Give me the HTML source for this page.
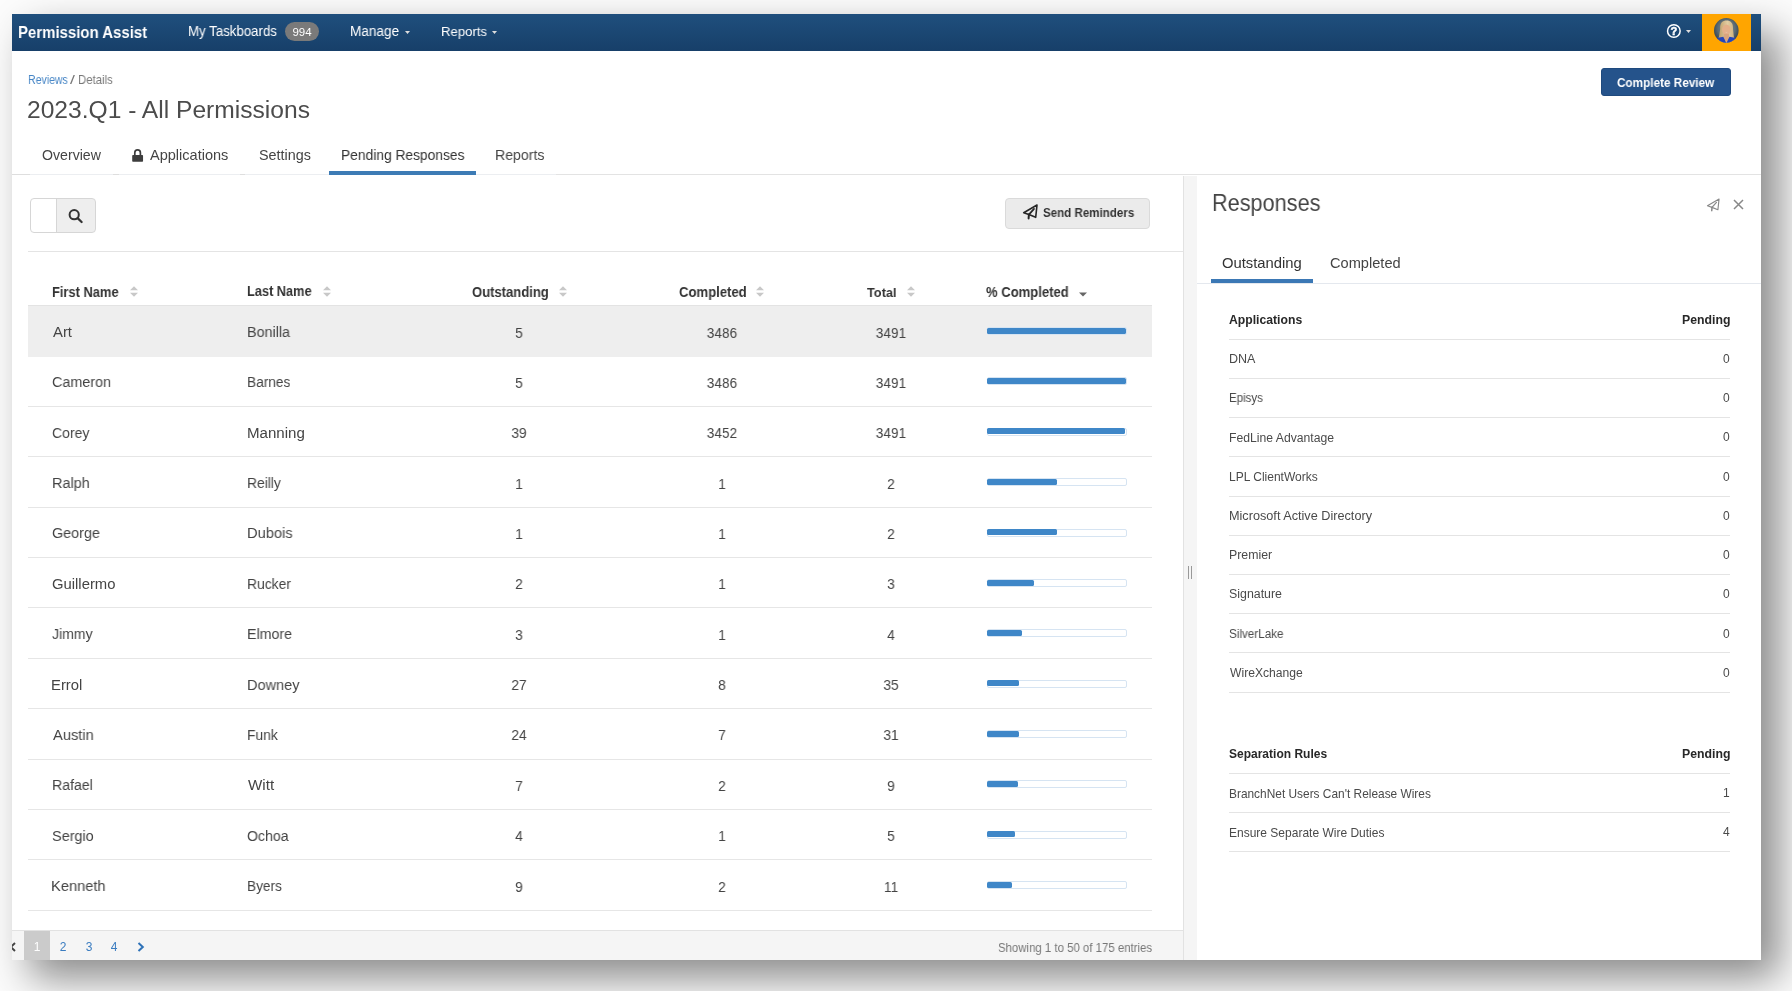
<!DOCTYPE html>
<html><head><meta charset="utf-8"><title>Permission Assist</title>
<style>
html,body{margin:0;padding:0;}
body{width:1792px;height:991px;overflow:hidden;background:#fcfcfc;position:relative;font-family:"Liberation Sans",sans-serif;}
#win{position:absolute;left:12px;top:14px;width:1749px;height:946px;background:#fff;overflow:hidden;
box-shadow:18px 18px 38px rgba(0,0,0,0.46);}
.t{position:absolute;white-space:nowrap;-webkit-font-smoothing:antialiased;will-change:transform;}
.r{position:absolute;}
</style></head><body>
<div id="win">
<div class="r" style="left:0.00px;top:0.00px;width:1749.00px;height:37.00px;background:linear-gradient(#1f4f7d,#173f69);"></div>
<div class="t" style="top:8.00px;font-size:16.576px;line-height:19.062px;color:#fff;padding-top:0.622px;font-weight:bold;left:6.19px;transform-origin:0 50%;transform: scaleX(0.9029);">Permission Assist</div>
<div class="t" style="top:10.00px;font-size:13.833px;line-height:15.908px;color:#fff;padding-top:0.150px;left:175.51px;transform-origin:0 50%;transform: scaleX(0.9588);">My Taskboards</div>
<div class="r" style="left:273.00px;top:8.00px;width:34.00px;height:19.00px;background:#7a7a7a;border-radius:10px;"></div>
<div class="t" style="top:12.00px;font-size:11.500px;line-height:13.225px;color:#fff;left:290.00px;transform:translateX(-50%);">994</div>
<div class="t" style="top:10.00px;font-size:13.886px;line-height:15.969px;color:#fff;padding-top:0.102px;left:337.78px;transform-origin:0 50%;transform: scaleX(0.9788);">Manage</div>
<div class="t" style="top:9.00px;font-size:13.608px;line-height:15.649px;color:#fff;padding-top:0.958px;left:428.62px;transform-origin:0 50%;transform: scaleX(0.9661);">Reports</div>
<svg class="r" style="left:392.5px;top:16.5px" width="5" height="3"><path d="M0 0H5L2.5 3Z" fill="#ddd"/></svg>
<svg class="r" style="left:480.3px;top:16.5px" width="5" height="3"><path d="M0 0H5L2.5 3Z" fill="#ddd"/></svg>
<svg class="r" style="left:1654px;top:9px" width="16" height="16" viewBox="0 0 16 16"><circle cx="7.85" cy="8" r="6.3" fill="none" stroke="#fff" stroke-width="1.5"/></svg>
<div class="t" style="top:11.00px;font-size:11.200px;line-height:12.88px;color:#fff;font-weight:bold;left:1662.20px;transform:translateX(-50%);-webkit-text-stroke:0.5px #fff;">?</div>
<svg class="r" style="left:1674px;top:16.2px" width="5" height="3"><path d="M0 0H5L2.5 3Z" fill="#ddd"/></svg>
<div class="r" style="left:1690.00px;top:0.00px;width:49.00px;height:37.00px;background:#ffa500;"></div>
<svg class="r" style="left:1702.2px;top:4.100000000000001px" width="25" height="25" viewBox="0 0 25 25">
<defs><clipPath id="cc"><circle cx="12.3" cy="12.4" r="12.3"/></clipPath>
<radialGradient id="bg" cx="50%" cy="42%" r="58%"><stop offset="0" stop-color="#8a979c"/><stop offset="0.6" stop-color="#5d6c74"/><stop offset="1" stop-color="#2f3f4c"/></radialGradient>
<linearGradient id="hair" x1="0" y1="0" x2="1" y2="0"><stop offset="0" stop-color="#b8975f"/><stop offset="0.55" stop-color="#e2cda2"/><stop offset="1" stop-color="#c9aa74"/></linearGradient></defs>
<g clip-path="url(#cc)"><rect width="25" height="25" fill="url(#bg)"/>
<path d="M6.2 11C5.8 4.5 8.8 2.4 12.6 2.4S19.4 4.6 19 11L19.8 18.5L22 25L3 25L5 18.5Z" fill="url(#hair)"/>
<ellipse cx="12.4" cy="11.6" rx="4.3" ry="5.2" fill="#e3b08a"/>
<path d="M10.8 13.8Q12.4 15 14.1 13.8Q12.4 14.3 10.8 13.8Z" fill="#e9cfc4"/>
<path d="M10 16L14.8 16L15.5 21L12.5 24.5L9.5 21Z" fill="#d9a47e"/>
<path d="M0.5 25L2.8 20L9.3 18.8L12.6 25.5Z M24.5 25L22 20L15.5 18.8L12.2 25.5Z" fill="#2546b8"/>
</g></svg>
<div class="t" style="top:58.00px;font-size:12.320px;line-height:14.168px;color:#4786c6;padding-top:0.745px;left:15.73px;transform-origin:0 50%;transform: scaleX(0.8555);">Reviews</div>
<div class="t" style="top:58.00px;font-size:12.320px;line-height:14.168px;color:#777;padding-top:0.745px;left:58.30px;transform-origin:0 50%;transform: scaleX(1.4333);">/</div>
<div class="t" style="top:58.00px;font-size:12.320px;line-height:14.168px;color:#777;padding-top:0.745px;left:65.66px;transform-origin:0 50%;transform: scaleX(0.9221);">Details</div>
<div class="t" style="top:81.00px;font-size:24.400px;line-height:28.06px;color:#4c4c4c;padding-top:0.611px;left:15.17px;transform-origin:0 50%;transform: scaleX(1.0084);">2023.Q1 - All Permissions</div>
<div class="r" style="left:1589.00px;top:54.00px;width:130.00px;height:28.00px;background:#25538b;border:1px solid #1f4a7e;border-radius:3px;box-sizing:border-box;"></div>
<div class="t" style="top:61.00px;font-size:12.285px;line-height:14.128px;color:#fff;padding-top:0.677px;font-weight:bold;left:1605.23px;transform-origin:0 50%;transform: scaleX(0.9570);">Complete Review</div>
<div class="t" style="top:133.00px;font-size:14.000px;line-height:16.1px;color:#444;padding-top:0.096px;left:29.93px;transform-origin:0 50%;transform: scaleX(1.0101);">Overview</div>
<svg class="r" style="left:120px;top:135px" width="12" height="13" viewBox="0 0 12 13"><path d="M2.8 6.8V3.75a2.8 2.8 0 0 1 5.6 0V6.8" fill="none" stroke="#3d3d3d" stroke-width="1.7"/><rect x="0.2" y="6.1" width="10.85" height="6.6" rx="0.8" fill="#3d3d3d"/></svg>
<div class="t" style="top:132.00px;font-size:14.400px;line-height:16.56px;color:#444;padding-top:0.728px;left:137.76px;transform-origin:0 50%;transform: scaleX(1.0102);">Applications</div>
<div class="t" style="top:133.00px;font-size:14.100px;line-height:16.215px;color:#444;padding-top:0.004px;left:246.85px;transform-origin:0 50%;transform: scaleX(1.0199);">Settings</div>
<div class="t" style="top:132.00px;font-size:14.742px;line-height:16.953px;color:#333;padding-top:0.913px;left:328.96px;transform-origin:0 50%;transform: scaleX(0.9362);">Pending Responses</div>
<div class="t" style="top:132.00px;font-size:14.742px;line-height:16.953px;color:#444;padding-top:0.913px;left:482.94px;transform-origin:0 50%;transform: scaleX(0.9579);">Reports</div>
<div class="r" style="left:0.00px;top:160.00px;width:544.00px;height:1.00px;background:#eceef1;"></div>
<div class="r" style="left:544.00px;top:160.00px;width:1205.00px;height:1.00px;background:#e3e3e3;"></div>
<div class="r" style="left:0.00px;top:160.00px;width:18.00px;height:1.00px;background:#dedede;"></div>
<div class="r" style="left:101.00px;top:160.00px;width:6.00px;height:1.00px;background:#dedede;"></div>
<div class="r" style="left:228.00px;top:160.00px;width:5.00px;height:1.00px;background:#dedede;"></div>
<div class="r" style="left:317.00px;top:156.50px;width:147.30px;height:4.20px;background:#3d7bb5;"></div>
<div class="r" style="left:18.00px;top:184.00px;width:66.00px;height:35.00px;border:1px solid #d6d6d6;border-radius:4px;box-sizing:border-box;background:linear-gradient(90deg,#fff 0,#fff 25px,#d6d6d6 25px,#d6d6d6 26px,#eee 26px);"></div>
<svg class="r" style="left:55px;top:193px" width="16" height="17" viewBox="0 0 16 17"><circle cx="7.2" cy="7.7" r="4.6" fill="none" stroke="#333" stroke-width="2"/><path d="M10.6 11.1L14.6 15" stroke="#333" stroke-width="2.2" stroke-linecap="round"/></svg>
<div class="r" style="left:993.00px;top:184.00px;width:145.00px;height:30.50px;background:#ebebeb;border:1px solid #dadada;border-radius:4px;box-sizing:border-box;"></div>
<svg class="r" style="left:1009.50px;top:188.50px" width="17.0" height="17.0"><path d="M15.00 2.00L1.70 9.70L6.90 11.60L13.70 14.30Z" fill="none" stroke="#262626" stroke-width="1.6" stroke-linejoin="round"/><path d="M12.00 5.90L6.90 11.60" stroke="#262626" stroke-width="1.7600000000000002" stroke-linecap="round"/><path d="M6.90 11.60L6.60 15.40" stroke="#262626" stroke-width="2.0" stroke-linecap="round"/></svg>
<div class="t" style="top:192.00px;font-size:12.022px;line-height:13.826px;color:#333;padding-top:0.819px;font-weight:bold;left:1030.55px;transform-origin:0 50%;transform: scaleX(0.9615);">Send Reminders</div>
<div class="r" style="left:16.00px;top:237.00px;width:1155.00px;height:1.00px;background:#e4e4e4;"></div>
<div class="t" style="top:270.00px;font-size:13.915px;line-height:16.002px;color:#333;padding-top:0.275px;font-weight:bold;left:40.23px;transform-origin:0 50%;transform: scaleX(0.9261);">First Name</div>
<svg class="r" style="left:117.5px;top:272px" width="8" height="11" viewBox="0 0 8 11"><path d="M0 4.3L4 0.3L8 4.3Z M0 6.7L4 10.7L8 6.7Z" fill="#c8c8c8"/></svg>
<div class="t" style="top:270.00px;font-size:13.860px;line-height:15.939px;color:#333;padding-top:0.326px;font-weight:bold;left:235.14px;transform-origin:0 50%;transform: scaleX(0.9213);">Last Name</div>
<svg class="r" style="left:310.6px;top:272px" width="8" height="11" viewBox="0 0 8 11"><path d="M0 4.3L4 0.3L8 4.3Z M0 6.7L4 10.7L8 6.7Z" fill="#c8c8c8"/></svg>
<div class="t" style="top:270.00px;font-size:14.080px;line-height:16.192px;color:#333;padding-top:0.123px;font-weight:bold;left:459.58px;transform-origin:0 50%;transform: scaleX(0.9261);">Outstanding</div>
<svg class="r" style="left:547px;top:272px" width="8" height="11" viewBox="0 0 8 11"><path d="M0 4.3L4 0.3L8 4.3Z M0 6.7L4 10.7L8 6.7Z" fill="#c8c8c8"/></svg>
<div class="t" style="top:270.00px;font-size:14.135px;line-height:16.255px;color:#333;padding-top:0.072px;font-weight:bold;left:666.78px;transform-origin:0 50%;transform: scaleX(0.9279);">Completed</div>
<svg class="r" style="left:744.4px;top:272px" width="8" height="11" viewBox="0 0 8 11"><path d="M0 4.3L4 0.3L8 4.3Z M0 6.7L4 10.7L8 6.7Z" fill="#c8c8c8"/></svg>
<div class="t" style="top:270.00px;font-size:13.640px;line-height:15.686px;color:#333;padding-top:0.528px;font-weight:bold;left:854.87px;transform-origin:0 50%;transform: scaleX(0.9349);">Total</div>
<svg class="r" style="left:895px;top:272px" width="8" height="11" viewBox="0 0 8 11"><path d="M0 4.3L4 0.3L8 4.3Z M0 6.7L4 10.7L8 6.7Z" fill="#c8c8c8"/></svg>
<div class="t" style="top:270.00px;font-size:14.135px;line-height:16.255px;color:#333;padding-top:0.072px;font-weight:bold;left:974.27px;transform-origin:0 50%;transform: scaleX(0.9248);">% Completed</div>
<svg class="r" style="left:1067px;top:278px" width="8" height="5" viewBox="0 0 8 5"><path d="M0 0.5L4 4.5L8 0.5Z" fill="#666"/></svg>
<div class="r" style="left:16.00px;top:291.00px;width:1124.00px;height:1.00px;background:#e3e3e3;"></div>
<div class="r" style="left:16.00px;top:291.50px;width:1124.00px;height:51.16px;background:#eeeeee;"></div>
<div class="t" style="top:310.00px;font-size:14.840px;line-height:17.066px;color:#444;padding-top:0.022px;left:40.66px;transform-origin:0 50%;transform: scaleX(0.9995);">Art</div>
<div class="t" style="top:310.00px;font-size:14.840px;line-height:17.066px;color:#444;padding-top:0.022px;left:234.82px;transform-origin:0 50%;transform: scaleX(0.9646);">Bonilla</div>
<div class="t" style="top:309.00px;font-size:15.344px;line-height:17.646px;color:#444;padding-top:0.558px;left:507.20px;transform:translateX(-50%) scaleX(0.8929);">5</div>
<div class="t" style="top:309.00px;font-size:15.344px;line-height:17.646px;color:#444;padding-top:0.558px;left:710.00px;transform:translateX(-50%) scaleX(0.8929);">3486</div>
<div class="t" style="top:309.00px;font-size:15.344px;line-height:17.646px;color:#444;padding-top:0.558px;left:878.50px;transform:translateX(-50%) scaleX(0.8929);">3491</div>
<div class="r" style="left:974.50px;top:313.10px;width:140.20px;height:8.00px;background:#fff;border:1px solid #d6e4f2;border-bottom-width:1.5px;border-radius:2px;box-sizing:border-box;"></div>
<div class="r" style="left:975.00px;top:313.70px;width:139.30px;height:6.00px;background:#3f87c8;border-radius:1.5px;"></div>
<div class="r" style="left:16.00px;top:392.02px;width:1124.00px;height:1.00px;background:#e6e6e6;"></div>
<div class="t" style="top:360.00px;font-size:14.840px;line-height:17.066px;color:#444;padding-top:0.382px;left:39.98px;transform-origin:0 50%;transform: scaleX(0.9687);">Cameron</div>
<div class="t" style="top:360.00px;font-size:14.840px;line-height:17.066px;color:#444;padding-top:0.382px;left:234.87px;transform-origin:0 50%;transform: scaleX(0.9235);">Barnes</div>
<div class="t" style="top:359.00px;font-size:15.344px;line-height:17.646px;color:#444;padding-top:0.918px;left:507.20px;transform:translateX(-50%) scaleX(0.8929);">5</div>
<div class="t" style="top:359.00px;font-size:15.344px;line-height:17.646px;color:#444;padding-top:0.918px;left:710.00px;transform:translateX(-50%) scaleX(0.8929);">3486</div>
<div class="t" style="top:359.00px;font-size:15.344px;line-height:17.646px;color:#444;padding-top:0.918px;left:878.50px;transform:translateX(-50%) scaleX(0.8929);">3491</div>
<div class="r" style="left:974.50px;top:363.46px;width:140.20px;height:8.00px;background:#fff;border:1px solid #d6e4f2;border-bottom-width:1.5px;border-radius:2px;box-sizing:border-box;"></div>
<div class="r" style="left:975.00px;top:364.06px;width:139.30px;height:6.00px;background:#3f87c8;border-radius:1.5px;"></div>
<div class="r" style="left:16.00px;top:442.38px;width:1124.00px;height:1.00px;background:#e6e6e6;"></div>
<div class="t" style="top:410.00px;font-size:14.840px;line-height:17.066px;color:#444;padding-top:0.742px;left:40.00px;transform-origin:0 50%;transform: scaleX(0.9431);">Corey</div>
<div class="t" style="top:410.00px;font-size:14.840px;line-height:17.066px;color:#444;padding-top:0.742px;left:234.75px;transform-origin:0 50%;transform: scaleX(1.0172);">Manning</div>
<div class="t" style="top:410.00px;font-size:15.344px;line-height:17.646px;color:#444;padding-top:0.278px;left:507.20px;transform:translateX(-50%) scaleX(0.8929);">39</div>
<div class="t" style="top:410.00px;font-size:15.344px;line-height:17.646px;color:#444;padding-top:0.278px;left:710.00px;transform:translateX(-50%) scaleX(0.8929);">3452</div>
<div class="t" style="top:410.00px;font-size:15.344px;line-height:17.646px;color:#444;padding-top:0.278px;left:878.50px;transform:translateX(-50%) scaleX(0.8929);">3491</div>
<div class="r" style="left:974.50px;top:413.82px;width:140.20px;height:8.00px;background:#fff;border:1px solid #d6e4f2;border-bottom-width:1.5px;border-radius:2px;box-sizing:border-box;"></div>
<div class="r" style="left:975.00px;top:414.42px;width:137.94px;height:6.00px;background:#3f87c8;border-radius:1.5px;"></div>
<div class="r" style="left:16.00px;top:492.74px;width:1124.00px;height:1.00px;background:#e6e6e6;"></div>
<div class="t" style="top:461.00px;font-size:14.840px;line-height:17.066px;color:#444;padding-top:0.102px;left:39.51px;transform-origin:0 50%;transform: scaleX(0.9749);">Ralph</div>
<div class="t" style="top:461.00px;font-size:14.840px;line-height:17.066px;color:#444;padding-top:0.102px;left:234.86px;transform-origin:0 50%;transform: scaleX(0.9337);">Reilly</div>
<div class="t" style="top:460.00px;font-size:15.344px;line-height:17.646px;color:#444;padding-top:0.638px;left:507.20px;transform:translateX(-50%) scaleX(0.8929);">1</div>
<div class="t" style="top:460.00px;font-size:15.344px;line-height:17.646px;color:#444;padding-top:0.638px;left:710.00px;transform:translateX(-50%) scaleX(0.8929);">1</div>
<div class="t" style="top:460.00px;font-size:15.344px;line-height:17.646px;color:#444;padding-top:0.638px;left:878.50px;transform:translateX(-50%) scaleX(0.8929);">2</div>
<div class="r" style="left:974.50px;top:464.18px;width:140.20px;height:8.00px;background:#fff;border:1px solid #d6e4f2;border-bottom-width:1.5px;border-radius:2px;box-sizing:border-box;"></div>
<div class="r" style="left:975.00px;top:464.78px;width:69.75px;height:6.00px;background:#3f87c8;border-radius:1.5px;"></div>
<div class="r" style="left:16.00px;top:543.10px;width:1124.00px;height:1.00px;background:#e6e6e6;"></div>
<div class="t" style="top:511.00px;font-size:14.840px;line-height:17.066px;color:#444;padding-top:0.462px;left:39.98px;transform-origin:0 50%;transform: scaleX(0.9684);">George</div>
<div class="t" style="top:511.00px;font-size:14.840px;line-height:17.066px;color:#444;padding-top:0.462px;left:234.79px;transform-origin:0 50%;transform: scaleX(0.9877);">Dubois</div>
<div class="t" style="top:510.00px;font-size:15.344px;line-height:17.646px;color:#444;padding-top:0.998px;left:507.20px;transform:translateX(-50%) scaleX(0.8929);">1</div>
<div class="t" style="top:510.00px;font-size:15.344px;line-height:17.646px;color:#444;padding-top:0.998px;left:710.00px;transform:translateX(-50%) scaleX(0.8929);">1</div>
<div class="t" style="top:510.00px;font-size:15.344px;line-height:17.646px;color:#444;padding-top:0.998px;left:878.50px;transform:translateX(-50%) scaleX(0.8929);">2</div>
<div class="r" style="left:974.50px;top:514.54px;width:140.20px;height:8.00px;background:#fff;border:1px solid #d6e4f2;border-bottom-width:1.5px;border-radius:2px;box-sizing:border-box;"></div>
<div class="r" style="left:975.00px;top:515.14px;width:69.75px;height:6.00px;background:#3f87c8;border-radius:1.5px;"></div>
<div class="r" style="left:16.00px;top:593.46px;width:1124.00px;height:1.00px;background:#e6e6e6;"></div>
<div class="t" style="top:561.00px;font-size:14.840px;line-height:17.066px;color:#444;padding-top:0.822px;left:39.96px;transform-origin:0 50%;transform: scaleX(0.9945);">Guillermo</div>
<div class="t" style="top:561.00px;font-size:14.840px;line-height:17.066px;color:#444;padding-top:0.822px;left:234.85px;transform-origin:0 50%;transform: scaleX(0.9373);">Rucker</div>
<div class="t" style="top:561.00px;font-size:15.344px;line-height:17.646px;color:#444;padding-top:0.358px;left:507.20px;transform:translateX(-50%) scaleX(0.8929);">2</div>
<div class="t" style="top:561.00px;font-size:15.344px;line-height:17.646px;color:#444;padding-top:0.358px;left:710.00px;transform:translateX(-50%) scaleX(0.8929);">1</div>
<div class="t" style="top:561.00px;font-size:15.344px;line-height:17.646px;color:#444;padding-top:0.358px;left:878.50px;transform:translateX(-50%) scaleX(0.8929);">3</div>
<div class="r" style="left:974.50px;top:564.90px;width:140.20px;height:8.00px;background:#fff;border:1px solid #d6e4f2;border-bottom-width:1.5px;border-radius:2px;box-sizing:border-box;"></div>
<div class="r" style="left:975.00px;top:565.50px;width:46.50px;height:6.00px;background:#3f87c8;border-radius:1.5px;"></div>
<div class="r" style="left:16.00px;top:643.82px;width:1124.00px;height:1.00px;background:#e6e6e6;"></div>
<div class="t" style="top:612.00px;font-size:14.840px;line-height:17.066px;color:#444;padding-top:0.182px;left:40.49px;transform-origin:0 50%;transform: scaleX(0.9462);">Jimmy</div>
<div class="t" style="top:612.00px;font-size:14.840px;line-height:17.066px;color:#444;padding-top:0.182px;left:234.83px;transform-origin:0 50%;transform: scaleX(0.9590);">Elmore</div>
<div class="t" style="top:611.00px;font-size:15.344px;line-height:17.646px;color:#444;padding-top:0.718px;left:507.20px;transform:translateX(-50%) scaleX(0.8929);">3</div>
<div class="t" style="top:611.00px;font-size:15.344px;line-height:17.646px;color:#444;padding-top:0.718px;left:710.00px;transform:translateX(-50%) scaleX(0.8929);">1</div>
<div class="t" style="top:611.00px;font-size:15.344px;line-height:17.646px;color:#444;padding-top:0.718px;left:878.50px;transform:translateX(-50%) scaleX(0.8929);">4</div>
<div class="r" style="left:974.50px;top:615.26px;width:140.20px;height:8.00px;background:#fff;border:1px solid #d6e4f2;border-bottom-width:1.5px;border-radius:2px;box-sizing:border-box;"></div>
<div class="r" style="left:975.00px;top:615.86px;width:34.88px;height:6.00px;background:#3f87c8;border-radius:1.5px;"></div>
<div class="r" style="left:16.00px;top:694.18px;width:1124.00px;height:1.00px;background:#e6e6e6;"></div>
<div class="t" style="top:662.00px;font-size:14.840px;line-height:17.066px;color:#444;padding-top:0.542px;left:39.49px;transform-origin:0 50%;transform: scaleX(0.9889);">Errol</div>
<div class="t" style="top:662.00px;font-size:14.840px;line-height:17.066px;color:#444;padding-top:0.542px;left:234.80px;transform-origin:0 50%;transform: scaleX(0.9781);">Downey</div>
<div class="t" style="top:662.00px;font-size:15.344px;line-height:17.646px;color:#444;padding-top:0.078px;left:507.20px;transform:translateX(-50%) scaleX(0.8929);">27</div>
<div class="t" style="top:662.00px;font-size:15.344px;line-height:17.646px;color:#444;padding-top:0.078px;left:710.00px;transform:translateX(-50%) scaleX(0.8929);">8</div>
<div class="t" style="top:662.00px;font-size:15.344px;line-height:17.646px;color:#444;padding-top:0.078px;left:878.50px;transform:translateX(-50%) scaleX(0.8929);">35</div>
<div class="r" style="left:974.50px;top:665.62px;width:140.20px;height:8.00px;background:#fff;border:1px solid #d6e4f2;border-bottom-width:1.5px;border-radius:2px;box-sizing:border-box;"></div>
<div class="r" style="left:975.00px;top:666.22px;width:31.89px;height:6.00px;background:#3f87c8;border-radius:1.5px;"></div>
<div class="r" style="left:16.00px;top:744.54px;width:1124.00px;height:1.00px;background:#e6e6e6;"></div>
<div class="t" style="top:712.00px;font-size:14.840px;line-height:17.066px;color:#444;padding-top:0.902px;left:40.66px;transform-origin:0 50%;transform: scaleX(0.9862);">Austin</div>
<div class="t" style="top:712.00px;font-size:14.840px;line-height:17.066px;color:#444;padding-top:0.902px;left:234.86px;transform-origin:0 50%;transform: scaleX(0.9352);">Funk</div>
<div class="t" style="top:712.00px;font-size:15.344px;line-height:17.646px;color:#444;padding-top:0.438px;left:507.20px;transform:translateX(-50%) scaleX(0.8929);">24</div>
<div class="t" style="top:712.00px;font-size:15.344px;line-height:17.646px;color:#444;padding-top:0.438px;left:710.00px;transform:translateX(-50%) scaleX(0.8929);">7</div>
<div class="t" style="top:712.00px;font-size:15.344px;line-height:17.646px;color:#444;padding-top:0.438px;left:878.50px;transform:translateX(-50%) scaleX(0.8929);">31</div>
<div class="r" style="left:974.50px;top:715.98px;width:140.20px;height:8.00px;background:#fff;border:1px solid #d6e4f2;border-bottom-width:1.5px;border-radius:2px;box-sizing:border-box;"></div>
<div class="r" style="left:975.00px;top:716.58px;width:31.50px;height:6.00px;background:#3f87c8;border-radius:1.5px;"></div>
<div class="r" style="left:16.00px;top:794.90px;width:1124.00px;height:1.00px;background:#e6e6e6;"></div>
<div class="t" style="top:763.00px;font-size:14.840px;line-height:17.066px;color:#444;padding-top:0.262px;left:39.53px;transform-origin:0 50%;transform: scaleX(0.9542);">Rafael</div>
<div class="t" style="top:763.00px;font-size:14.840px;line-height:17.066px;color:#444;padding-top:0.262px;left:235.92px;transform-origin:0 50%;transform: scaleX(1.0246);">Witt</div>
<div class="t" style="top:762.00px;font-size:15.344px;line-height:17.646px;color:#444;padding-top:0.798px;left:507.20px;transform:translateX(-50%) scaleX(0.8929);">7</div>
<div class="t" style="top:762.00px;font-size:15.344px;line-height:17.646px;color:#444;padding-top:0.798px;left:710.00px;transform:translateX(-50%) scaleX(0.8929);">2</div>
<div class="t" style="top:762.00px;font-size:15.344px;line-height:17.646px;color:#444;padding-top:0.798px;left:878.50px;transform:translateX(-50%) scaleX(0.8929);">9</div>
<div class="r" style="left:974.50px;top:766.34px;width:140.20px;height:8.00px;background:#fff;border:1px solid #d6e4f2;border-bottom-width:1.5px;border-radius:2px;box-sizing:border-box;"></div>
<div class="r" style="left:975.00px;top:766.94px;width:31.00px;height:6.00px;background:#3f87c8;border-radius:1.5px;"></div>
<div class="r" style="left:16.00px;top:845.26px;width:1124.00px;height:1.00px;background:#e6e6e6;"></div>
<div class="t" style="top:813.00px;font-size:14.840px;line-height:17.066px;color:#444;padding-top:0.622px;left:40.05px;transform-origin:0 50%;transform: scaleX(0.9753);">Sergio</div>
<div class="t" style="top:813.00px;font-size:14.840px;line-height:17.066px;color:#444;padding-top:0.622px;left:235.33px;transform-origin:0 50%;transform: scaleX(0.9504);">Ochoa</div>
<div class="t" style="top:813.00px;font-size:15.344px;line-height:17.646px;color:#444;padding-top:0.158px;left:507.20px;transform:translateX(-50%) scaleX(0.8929);">4</div>
<div class="t" style="top:813.00px;font-size:15.344px;line-height:17.646px;color:#444;padding-top:0.158px;left:710.00px;transform:translateX(-50%) scaleX(0.8929);">1</div>
<div class="t" style="top:813.00px;font-size:15.344px;line-height:17.646px;color:#444;padding-top:0.158px;left:878.50px;transform:translateX(-50%) scaleX(0.8929);">5</div>
<div class="r" style="left:974.50px;top:816.70px;width:140.20px;height:8.00px;background:#fff;border:1px solid #d6e4f2;border-bottom-width:1.5px;border-radius:2px;box-sizing:border-box;"></div>
<div class="r" style="left:975.00px;top:817.30px;width:27.90px;height:6.00px;background:#3f87c8;border-radius:1.5px;"></div>
<div class="r" style="left:16.00px;top:895.62px;width:1124.00px;height:1.00px;background:#e6e6e6;"></div>
<div class="t" style="top:863.00px;font-size:14.840px;line-height:17.066px;color:#444;padding-top:0.982px;left:39.49px;transform-origin:0 50%;transform: scaleX(0.9863);">Kenneth</div>
<div class="t" style="top:863.00px;font-size:14.840px;line-height:17.066px;color:#444;padding-top:0.982px;left:234.87px;transform-origin:0 50%;transform: scaleX(0.9206);">Byers</div>
<div class="t" style="top:863.00px;font-size:15.344px;line-height:17.646px;color:#444;padding-top:0.518px;left:507.20px;transform:translateX(-50%) scaleX(0.8929);">9</div>
<div class="t" style="top:863.00px;font-size:15.344px;line-height:17.646px;color:#444;padding-top:0.518px;left:710.00px;transform:translateX(-50%) scaleX(0.8929);">2</div>
<div class="t" style="top:863.00px;font-size:15.344px;line-height:17.646px;color:#444;padding-top:0.518px;left:878.50px;transform:translateX(-50%) scaleX(0.8929);">11</div>
<div class="r" style="left:974.50px;top:867.06px;width:140.20px;height:8.00px;background:#fff;border:1px solid #d6e4f2;border-bottom-width:1.5px;border-radius:2px;box-sizing:border-box;"></div>
<div class="r" style="left:975.00px;top:867.66px;width:25.36px;height:6.00px;background:#3f87c8;border-radius:1.5px;"></div>
<div class="r" style="left:0.00px;top:916.00px;width:1171.00px;height:1.00px;background:#e2e2e2;"></div>
<div class="r" style="left:0.00px;top:917.00px;width:1171.00px;height:29.00px;background:#f5f5f5;"></div>
<div class="r" style="left:12.00px;top:917.00px;width:26.40px;height:29.00px;background:#cbcbcb;"></div>
<div class="t" style="top:927.00px;font-size:12.000px;line-height:13.8px;color:#fff;left:25.20px;transform:translateX(-50%);">1</div>
<div class="t" style="top:927.00px;font-size:12.000px;line-height:13.8px;color:#3a7cc0;left:50.50px;transform:translateX(-50%);">2</div>
<div class="t" style="top:927.00px;font-size:12.000px;line-height:13.8px;color:#3a7cc0;left:76.50px;transform:translateX(-50%);">3</div>
<div class="t" style="top:927.00px;font-size:12.000px;line-height:13.8px;color:#3a7cc0;left:102.00px;transform:translateX(-50%);">4</div>
<svg class="r" style="left:125px;top:928px" width="8" height="10" viewBox="0 0 8 10"><path d="M1.5 1L5.8 5L1.5 9" fill="none" stroke="#2e72b8" stroke-width="2"/></svg>
<svg class="r" style="left:-2px;top:928px" width="6" height="10" viewBox="0 0 6 10"><path d="M5 1L0.7 5L5 9" fill="none" stroke="#444" stroke-width="2"/></svg>
<div class="t" style="top:927.00px;font-size:12.540px;line-height:14.421px;color:#777;padding-top:0.042px;left:986.19px;transform-origin:0 50%;transform: scaleX(0.9103);">Showing 1 to 50 of 175 entries</div>
<div class="r" style="left:1171.00px;top:161.50px;width:1.00px;height:784.50px;background:#e2e2e2;"></div>
<div class="r" style="left:1172.00px;top:161.50px;width:13.00px;height:784.50px;background:#f5f5f5;"></div>
<div class="r" style="left:1175.50px;top:552.00px;width:1.00px;height:13.00px;background:#999;"></div>
<div class="r" style="left:1178.50px;top:552.00px;width:1.00px;height:13.00px;background:#999;"></div>
<div class="t" style="top:175.00px;font-size:24.265px;line-height:27.905px;color:#444;padding-top:0.235px;left:1200.21px;transform-origin:0 50%;transform: scaleX(0.8943);">Responses</div>
<svg class="r" style="left:1693.55px;top:183.20px" width="14.8" height="14.8"><path d="M13.05 2.00L1.48 8.70L6.00 10.35L11.92 12.70Z" fill="none" stroke="#888" stroke-width="1.15" stroke-linejoin="round"/><path d="M10.44 5.39L6.00 10.35" stroke="#888" stroke-width="1.265" stroke-linecap="round"/><path d="M6.00 10.35L5.74 13.66" stroke="#888" stroke-width="1.5" stroke-linecap="round"/></svg>
<svg class="r" style="left:1721px;top:184.5px" width="11" height="11" viewBox="0 0 11 11"><path d="M1 1L10 10M10 1L1 10" stroke="#888" stroke-width="1.5"/></svg>
<div class="t" style="top:241.00px;font-size:14.500px;line-height:16.675px;color:#333;padding-top:0.136px;left:1210.00px;transform-origin:0 50%;transform: scaleX(1.0209);">Outstanding</div>
<div class="t" style="top:241.00px;font-size:14.300px;line-height:16.445px;color:#444;padding-top:0.320px;left:1318.37px;transform-origin:0 50%;transform: scaleX(1.0217);">Completed</div>
<div class="r" style="left:1185.00px;top:268.50px;width:564.00px;height:1.00px;background:#e4e8ee;"></div>
<div class="r" style="left:1199.00px;top:265.00px;width:102.00px;height:4.00px;background:#3b78b5;"></div>
<div class="t" style="top:299.00px;font-size:12.050px;line-height:13.857px;color:#282828;padding-top:0.794px;font-weight:bold;left:1217.40px;transform-origin:0 50%;transform: scaleX(1.0124);">Applications</div>
<div class="t" style="top:299.00px;font-size:11.900px;line-height:13.685px;color:#282828;padding-top:0.932px;font-weight:bold;left:1669.57px;transform-origin:0 50%;transform: scaleX(1.0322);">Pending</div>
<div class="r" style="left:1217.00px;top:324.60px;width:501.00px;height:1.00px;background:#e4e4e4;"></div>
<div class="t" style="top:339.00px;font-size:12.000px;line-height:13.8px;color:#4a4a4a;padding-top:0.040px;left:1216.67px;transform-origin:0 50%;transform: scaleX(1.0440);">DNA</div>
<div class="t" style="top:339.00px;font-size:12.000px;line-height:13.8px;color:#4a4a4a;right:31.70px;transform-origin:100% 50%;">0</div>
<div class="r" style="left:1217.00px;top:363.83px;width:501.00px;height:1.00px;background:#e4e4e4;"></div>
<div class="t" style="top:378.00px;font-size:12.000px;line-height:13.8px;color:#4a4a4a;padding-top:0.270px;left:1216.75px;transform-origin:0 50%;transform: scaleX(0.9608);">Episys</div>
<div class="t" style="top:378.00px;font-size:12.000px;line-height:13.8px;color:#4a4a4a;right:31.70px;transform-origin:100% 50%;">0</div>
<div class="r" style="left:1217.00px;top:403.06px;width:501.00px;height:1.00px;background:#e4e4e4;"></div>
<div class="t" style="top:417.00px;font-size:12.000px;line-height:13.8px;color:#4a4a4a;padding-top:0.500px;left:1216.69px;transform-origin:0 50%;transform: scaleX(1.0156);">FedLine Advantage</div>
<div class="t" style="top:417.00px;font-size:12.000px;line-height:13.8px;color:#4a4a4a;right:31.70px;transform-origin:100% 50%;">0</div>
<div class="r" style="left:1217.00px;top:442.29px;width:501.00px;height:1.00px;background:#e4e4e4;"></div>
<div class="t" style="top:456.00px;font-size:12.000px;line-height:13.8px;color:#4a4a4a;padding-top:0.730px;left:1216.71px;transform-origin:0 50%;transform: scaleX(0.9977);">LPL ClientWorks</div>
<div class="t" style="top:457.00px;font-size:12.000px;line-height:13.8px;color:#4a4a4a;right:31.70px;transform-origin:100% 50%;">0</div>
<div class="r" style="left:1217.00px;top:481.52px;width:501.00px;height:1.00px;background:#e4e4e4;"></div>
<div class="t" style="top:495.00px;font-size:12.000px;line-height:13.8px;color:#4a4a4a;padding-top:0.960px;left:1216.65px;transform-origin:0 50%;transform: scaleX(1.0563);">Microsoft Active Directory</div>
<div class="t" style="top:496.00px;font-size:12.000px;line-height:13.8px;color:#4a4a4a;right:31.70px;transform-origin:100% 50%;">0</div>
<div class="r" style="left:1217.00px;top:520.75px;width:501.00px;height:1.00px;background:#e4e4e4;"></div>
<div class="t" style="top:535.00px;font-size:12.000px;line-height:13.8px;color:#4a4a4a;padding-top:0.190px;left:1216.68px;transform-origin:0 50%;transform: scaleX(1.0262);">Premier</div>
<div class="t" style="top:535.00px;font-size:12.000px;line-height:13.8px;color:#4a4a4a;right:31.70px;transform-origin:100% 50%;">0</div>
<div class="r" style="left:1217.00px;top:559.98px;width:501.00px;height:1.00px;background:#e4e4e4;"></div>
<div class="t" style="top:574.00px;font-size:12.000px;line-height:13.8px;color:#4a4a4a;padding-top:0.420px;left:1217.14px;transform-origin:0 50%;transform: scaleX(1.0316);">Signature</div>
<div class="t" style="top:574.00px;font-size:12.000px;line-height:13.8px;color:#4a4a4a;right:31.70px;transform-origin:100% 50%;">0</div>
<div class="r" style="left:1217.00px;top:599.21px;width:501.00px;height:1.00px;background:#e4e4e4;"></div>
<div class="t" style="top:613.00px;font-size:12.000px;line-height:13.8px;color:#4a4a4a;padding-top:0.650px;left:1217.17px;transform-origin:0 50%;transform: scaleX(0.9734);">SilverLake</div>
<div class="t" style="top:614.00px;font-size:12.000px;line-height:13.8px;color:#4a4a4a;right:31.70px;transform-origin:100% 50%;">0</div>
<div class="r" style="left:1217.00px;top:638.44px;width:501.00px;height:1.00px;background:#e4e4e4;"></div>
<div class="t" style="top:652.00px;font-size:12.000px;line-height:13.8px;color:#4a4a4a;padding-top:0.880px;left:1217.64px;transform-origin:0 50%;transform: scaleX(1.0104);">WireXchange</div>
<div class="t" style="top:653.00px;font-size:12.000px;line-height:13.8px;color:#4a4a4a;right:31.70px;transform-origin:100% 50%;">0</div>
<div class="r" style="left:1217.00px;top:677.67px;width:501.00px;height:1.00px;background:#e4e4e4;"></div>
<div class="t" style="top:733.00px;font-size:11.900px;line-height:13.685px;color:#282828;padding-top:0.932px;font-weight:bold;left:1217.34px;transform-origin:0 50%;transform: scaleX(1.0098);">Separation Rules</div>
<div class="t" style="top:733.00px;font-size:11.900px;line-height:13.685px;color:#282828;padding-top:0.932px;font-weight:bold;left:1669.57px;transform-origin:0 50%;transform: scaleX(1.0322);">Pending</div>
<div class="r" style="left:1217.00px;top:759.00px;width:501.00px;height:1.00px;background:#e4e4e4;"></div>
<div class="t" style="top:773.00px;font-size:11.850px;line-height:13.627px;color:#4a4a4a;padding-top:0.578px;left:1216.72px;transform-origin:0 50%;transform: scaleX(1.0042);">BranchNet Users Can't Release Wires</div>
<div class="t" style="top:773.00px;font-size:12.000px;line-height:13.8px;color:#4a4a4a;right:31.70px;transform-origin:100% 50%;">1</div>
<div class="r" style="left:1217.00px;top:797.95px;width:501.00px;height:1.00px;background:#e4e4e4;"></div>
<div class="t" style="top:812.00px;font-size:11.850px;line-height:13.627px;color:#4a4a4a;padding-top:0.528px;left:1216.71px;transform-origin:0 50%;transform: scaleX(1.0134);">Ensure Separate Wire Duties</div>
<div class="t" style="top:812.00px;font-size:12.000px;line-height:13.8px;color:#4a4a4a;right:31.70px;transform-origin:100% 50%;">4</div>
<div class="r" style="left:1217.00px;top:836.90px;width:501.00px;height:1.00px;background:#e4e4e4;"></div>
</div>
</body></html>
